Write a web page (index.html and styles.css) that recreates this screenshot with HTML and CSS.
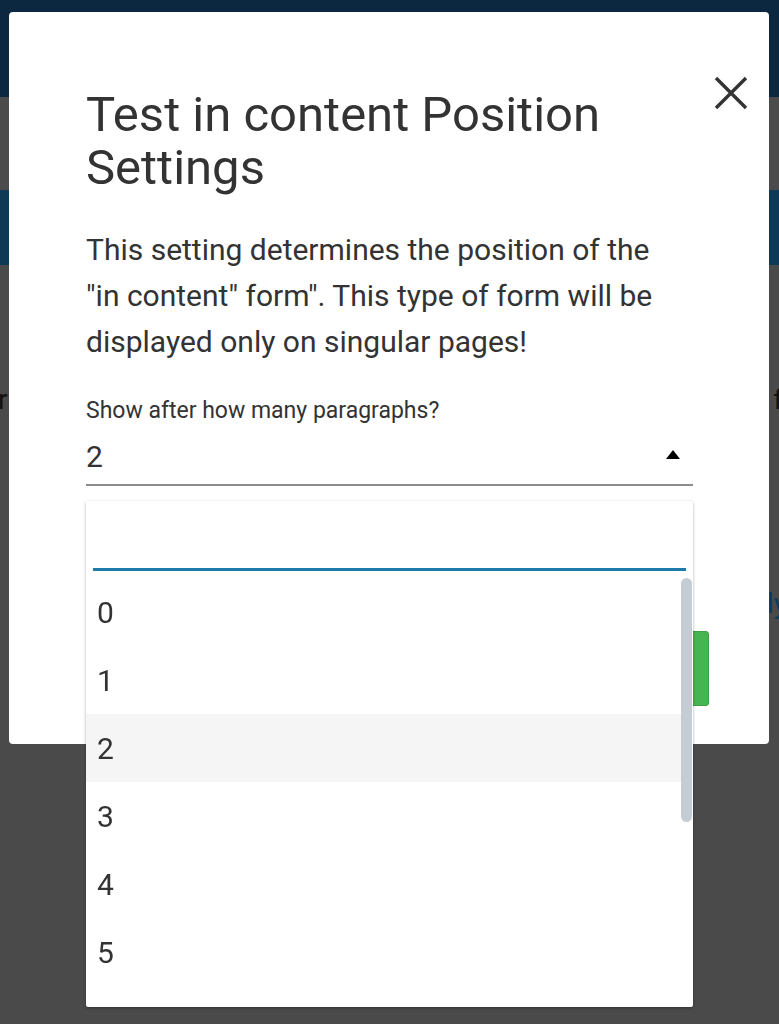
FILE: index.html
```html
<!DOCTYPE html>
<html lang="en">
<head>
<meta charset="utf-8">
<title>Position Settings</title>
<link rel="stylesheet" href="styles.css">
</head>
<body>
<div class="page">
  <div class="band-navy"></div>
  <div class="band-gray"></div>
  <div class="band-blue"></div>
  <div class="page-body">
    <div class="bg-line">
      <span class="bg-left">r</span>
      <span class="bg-right">f</span>
    </div>
    <div class="bg-line bg-line-link">
      <span class="bg-right bg-link">ly</span>
    </div>
  </div>
</div>

<div class="modal">
  <button class="close" aria-label="Close">
    <svg width="34" height="34" viewBox="0 0 34 34"><path d="M2 2 L32 32 M32 2 L2 32" stroke="#333" stroke-width="3.4" stroke-linecap="butt" fill="none"/></svg>
  </button>
  <div class="modal-content">
    <h2 class="title">Test in content Position Settings</h2>
    <p class="desc">This setting determines the position of the "in content" form". This type of form will be displayed only on singular pages!</p>
    <div class="field">
      <label class="field-label">Show after how many paragraphs?</label>
      <div class="select">
        <span class="select-value">2</span>
        <span class="select-arrow"></span>
      </div>
      <div class="dropdown">
        <div class="search"><input class="search-input" type="text"></div>
        <ul class="options">
          <li class="option">0</li>
          <li class="option">1</li>
          <li class="option active">2</li>
          <li class="option">3</li>
          <li class="option">4</li>
          <li class="option">5</li>
          <li class="option">6</li>
          <li class="option">7</li>
          <li class="option">8</li>
          <li class="option">9</li>
          <li class="option">10</li>
        </ul>
        <div class="scroll-thumb"></div>
      </div>
    </div>
    <div class="footer">
      <button class="save">Save</button>
    </div>
  </div>
</div>
</body>
</html>
```
FILE: styles.css
```css
html, body {
  margin: 0;
  padding: 0;
}
body {
  width: 779px;
  height: 1024px;
  overflow: hidden;
  background: #494949;
  font-family: Roboto, "Liberation Sans", sans-serif;
}
.page {
  display: flex;
  flex-direction: column;
  height: 1024px;
}
.band-navy { height: 97px; background: #0c2840; }
.band-gray { height: 93px; background: #4b4b4b; }
.band-blue { height: 75px; background: #0e3a57; }
.page-body {
  flex: 1;
  background: #4a4a4a;
  padding-top: 118px;
}
.bg-line {
  display: flex;
  justify-content: space-between;
  font-size: 28px;
  line-height: 34px;
  color: #111;
}
.bg-left { margin-left: -2px; }
.bg-right { margin-right: -4px; }
.bg-line-link {
  margin-top: 170px;
  justify-content: flex-end;
}
.bg-link { color: #0d3a5c; margin-right: -8px; }

.modal {
  position: fixed;
  left: 9px;
  top: 12px;
  width: 760px;
  height: 732px;
  background: #fff;
  border-radius: 4px;
  box-sizing: border-box;
}
.close {
  position: absolute;
  right: 21px;
  top: 64px;
  width: 34px;
  height: 34px;
  padding: 0;
  border: 0;
  background: none;
  display: flex;
}
.modal-content {
  padding: 76px 76px 0 77px;
}
.title {
  margin: 0;
  font-size: 49px;
  line-height: 53px;
  font-weight: 400;
  color: #333;
}
.desc {
  margin: 33px 0 0;
  padding-right: 15px;
  font-size: 30px;
  line-height: 46px;
  color: #333;
}
.field {
  position: relative;
  margin-top: 32px;
}
.field-label {
  display: block;
  font-size: 23px;
  line-height: 28px;
  color: #333;
}
.select {
  display: flex;
  align-items: center;
  justify-content: space-between;
  height: 61px;
  box-sizing: border-box;
  padding-top: 3px;
  border-bottom: 2px solid #8c8c8c;
}
.select-value {
  font-size: 30px;
  color: #333;
}
.select-arrow {
  width: 0;
  height: 0;
  border-left: 7px solid transparent;
  border-right: 7px solid transparent;
  border-bottom: 9px solid #000;
  margin-right: 13px;
  margin-bottom: 4px;
}
.dropdown {
  position: absolute;
  left: 0;
  right: 0;
  top: calc(100% + 15px);
  height: 506px;
  background: #fff;
  box-shadow: 0 1px 3px rgba(0,0,0,0.35);
  border-radius: 2px;
  display: flex;
  flex-direction: column;
  z-index: 2;
}
.search {
  padding: 7px 7px 0;
}
.search-input {
  display: block;
  width: 100%;
  box-sizing: border-box;
  height: 63px;
  border: 0;
  border-bottom: 3px solid #1e7aa8;
  outline: none;
  background: #fff;
}
.options {
  list-style: none;
  margin: 7px 7px 0 0;
  padding: 0;
  flex: 1;
  overflow: hidden;
}
.scroll-thumb {
  position: absolute;
  right: 1px;
  top: 77px;
  width: 11px;
  height: 244px;
  background: #c4cdd4;
  border-radius: 6px;
}
.option {
  height: 68px;
  display: flex;
  align-items: center;
  padding-left: 11px;
  font-size: 30px;
  color: #333;
}
.option.active {
  background: #f5f5f5;
}
.footer {
  display: flex;
  justify-content: flex-end;
  margin-top: 145px;
  margin-right: -16px;
}
.save {
  width: 120px;
  height: 75px;
  background: #46b450;
  border: 1px solid #3d9f46;
  border-radius: 3px;
  color: #fff;
  font-size: 20px;
  font-family: Roboto, sans-serif;
}
```
